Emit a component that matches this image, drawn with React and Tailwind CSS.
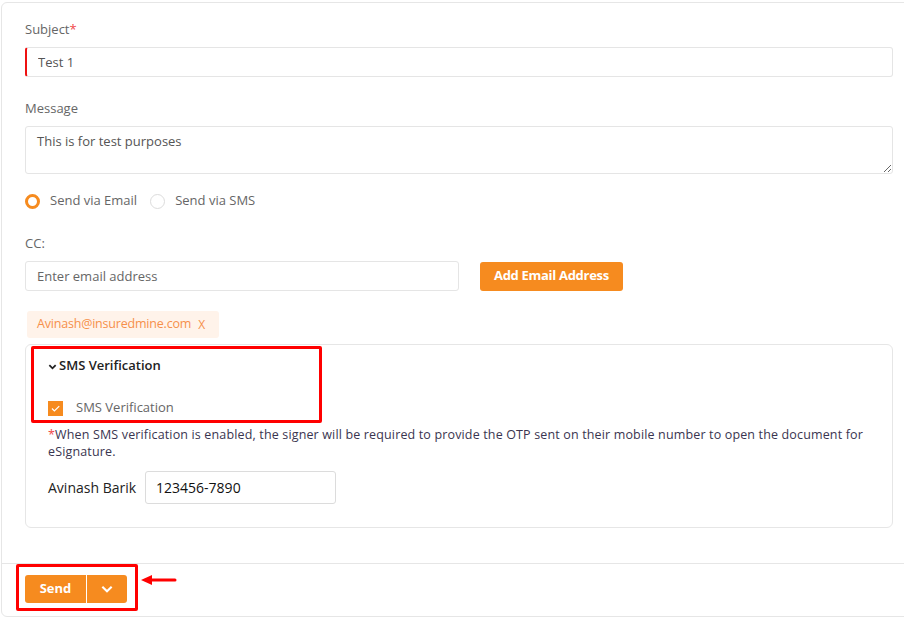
import React from 'react'

const font = { fontFamily: '"Open Sans", "Liberation Sans", sans-serif' }

function Radio({ checked, label }) {
  return (
    <label className="flex items-center gap-[10px] text-[13px] text-[#666]">
      <span
        className={`w-[15px] h-[15px] rounded-full bg-white ${checked ? 'border-[3px] border-[#f68b1f]' : 'border border-[#dcdcdc]'}`}
      />
      {label}
    </label>
  )
}

export default function App() {
  return (
    <div className="w-[904px] h-[622px] overflow-hidden bg-white" style={font}>
      <div className="relative ml-[1px] mt-[2px] w-[920px] h-[615px] border border-[#e6e6e6] rounded-tl-[6px] rounded-bl-[6px] flex flex-col">
        {/* form body */}
        <div className="flex-1 pl-[23px] pt-[16px]">
          <div className="w-[868px] flex flex-col">
            <div className="h-5 leading-5 text-[13px] text-[#666]">
              Subject<span className="text-[#f04848]">*</span>
            </div>
            <input
              readOnly
              value="Test 1"
              className="mt-2 h-[30px] w-full border border-[#e5e5e5] border-l-2 border-l-[#ee1111] rounded-[3px] pl-[11px] text-[13px] text-[#555] outline-none"
            />

            <div className="mt-[21px] h-5 leading-5 text-[13px] text-[#666]">Message</div>
            <textarea
              readOnly
              value="This is for test purposes"
              className="mt-2 h-[48px] w-full border border-[#e5e5e5] rounded-[3px] px-[11px] pt-[5px] text-[13px] text-[#555] outline-none"
            />

            <div className="mt-[17px] h-5 flex items-center gap-[13px]">
              <Radio checked label="Send via Email" />
              <Radio label="Send via SMS" />
            </div>

            <div className="mt-[22px] h-5 leading-5 text-[13px] text-[#666]">CC:</div>
            <div className="mt-2 flex items-center">
              <input
                readOnly
                placeholder="Enter email address"
                className="h-[30px] w-[434px] border border-[#e5e5e5] rounded-[3px] px-[11px] text-[13px] text-[#555] placeholder:text-[#666] outline-none"
              />
              <button className="ml-[21px] h-[29px] px-[14px] bg-[#f68b1f] rounded-[3px] text-white text-[13px] font-bold tracking-[-0.3px]">
                Add Email Address
              </button>
            </div>

            <div className="mt-5 self-start ml-[2px] h-[27px] flex items-center pl-[10px] pr-[14px] gap-[7px] bg-[#fff3ea] rounded-[3px] text-[12.5px] tracking-[-0.2px] text-[#f6904a]">
              <span>Avinash@insuredmine.com</span>
              <span className="text-[12px]">X</span>
            </div>

            {/* SMS verification block */}
            <div className="relative mt-[6px] h-[184px] border border-[#e6e6e6] rounded-[6px] pl-[22px] pt-[11px]">
              <div className="h-5 flex items-center text-[13px] font-semibold text-[#222]">
                <svg width="9" height="9" viewBox="0 0 10 10" className="mr-[2px]">
                  <path d="M1.5 3.5 L5 7 L8.5 3.5" fill="none" stroke="#222" strokeWidth="2" />
                </svg>
                SMS Verification
              </div>
              <div className="mt-[22px] h-5 flex items-center gap-[13px] text-[13px] text-[#666]">
                <span className="w-[15px] h-[15px] bg-[#f68b1f] flex items-center justify-center">
                  <svg width="11" height="11" viewBox="0 0 10 10">
                    <path d="M1.8 5 L4 7.2 L8.4 2.8" fill="none" stroke="#fff" strokeWidth="1.1" />
                  </svg>
                </span>
                SMS Verification
              </div>
              <p className="mt-[8px] text-[12.5px] leading-[17px] text-[#3a3550] tracking-[0.15px]">
                <span className="text-[#f04848]">*</span>When SMS verification is enabled, the signer will be required to provide the OTP sent on their mobile number to open the document for
                <br />
                eSignature.
              </p>
              <div className="mt-[11px] flex items-center">
                <span className="text-[14px] text-[#222]">Avinash Barik</span>
                <input
                  readOnly
                  value="123456-7890"
                  className="ml-[9px] h-[33px] w-[191px] border border-[#dcdcdc] rounded-[3px] px-[10px] text-[14px] text-[#111] outline-none"
                />
              </div>

              {/* annotation box */}
              <div className="absolute left-[5px] top-[1px] w-[291px] h-[77px] border-[3px] border-[#ff0000] rounded-[2px] pointer-events-none" />
            </div>
          </div>
        </div>

        {/* footer */}
        <div className="relative h-[53px] border-t border-[#e6e6e6] pl-[23px] pt-[11px]">
          <div className="flex h-[28px] w-[102px] rounded-[3px] overflow-hidden">
            <button className="w-[61px] bg-[#f68b1f] text-white text-[13px] font-bold">Send</button>
            <div className="w-px bg-white" />
            <button className="flex-1 bg-[#f68b1f] flex items-center justify-center">
              <svg width="14" height="14" viewBox="0 0 12 12">
                <path d="M2 4 L6 8 L10 4" fill="none" stroke="#fff" strokeWidth="1.8" />
              </svg>
            </button>
          </div>

          {/* annotation box + arrow */}
          <div className="absolute left-[14px] top-0 w-[122px] h-[47px] border-[3px] border-[#ff0000] rounded-[2px] pointer-events-none" />
          <svg className="absolute left-[137px] top-[9px]" width="40" height="14" viewBox="0 0 40 14">
            <path d="M10 7 L36 7" stroke="#ff0000" strokeWidth="3" strokeLinecap="round" />
            <path d="M2 7 L13 2 L13 12 Z" fill="#ff0000" />
          </svg>
        </div>
      </div>
    </div>
  )
}
